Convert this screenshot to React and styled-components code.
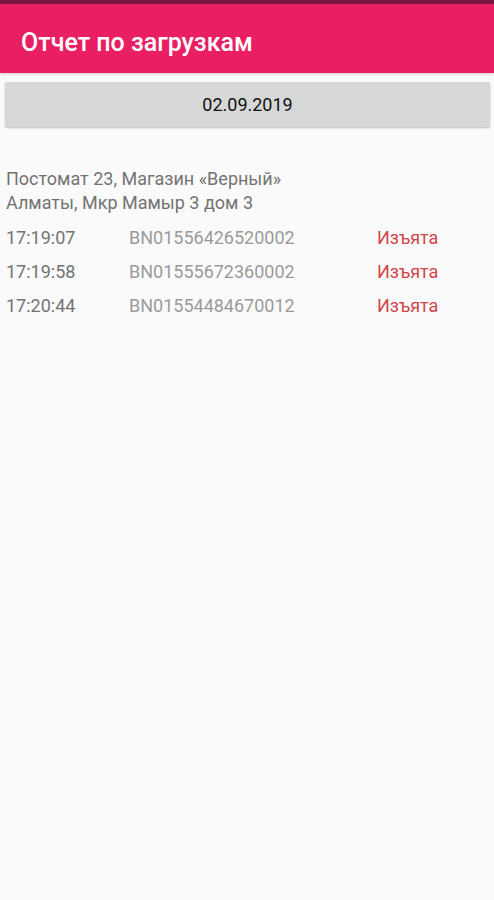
import * as React from 'react'
import styled, { createGlobalStyle } from 'styled-components'

const Global = createGlobalStyle`
  html, body {
    margin: 0;
    padding: 0;
    background: #fafafa;
    font-family: Roboto, "Noto Sans", sans-serif;
  }
`

const Screen = styled.div`
  width: 494px;
  min-height: 900px;
  background: #fafafa;
`

const StatusBar = styled.div`
  height: 4px;
  background: #7a1645;
`

const AppBar = styled.header`
  height: 69px;
  background: #e91e63;
  display: flex;
  align-items: center;
  padding: 0 21px;
  box-shadow: 0 1px 3px rgba(0, 0, 0, 0.2);
`

const Title = styled.h1`
  margin: 0;
  color: #fff;
  font-size: 25px;
  font-weight: 500;
  padding-top: 7px;
`

const DateButton = styled.button`
  display: block;
  margin: 9px 4px 0 5px;
  width: calc(100% - 9px);
  height: 45px;
  border: none;
  border-radius: 2px;
  background: #d6d7d7;
  color: #111;
  font-family: Roboto, sans-serif;
  font-size: 18px;
  box-shadow: 0 1px 2px rgba(0, 0, 0, 0.25);
`

const Content = styled.div`
  padding: 40px 6px 0;
  color: #737373;
  font-size: 18px;
`

const Address = styled.div`
  line-height: 23.5px;
  margin-bottom: 6px;
`

const Row = styled.div`
  display: grid;
  grid-template-columns: 123px 248px 1fr;
  height: 34px;
  align-items: center;
`

const Code = styled.span`
  color: #9a9a9a;
`

const Status = styled.span`
  color: #d0464a;
`

const rows = [
  ['17:19:07', 'BN01556426520002'],
  ['17:19:58', 'BN01555672360002'],
  ['17:20:44', 'BN01554484670012'],
]

export default function App() {
  return (
    <Screen>
      <Global />
      <StatusBar />
      <AppBar>
        <Title>Отчет по загрузкам</Title>
      </AppBar>
      <DateButton>02.09.2019</DateButton>
      <Content>
        <Address>
          Постомат 23, Магазин «Верный»
          <br />
          Алматы, Мкр Мамыр 3 дом 3
        </Address>
        {rows.map(([time, code]) => (
          <Row key={code}>
            <span>{time}</span>
            <Code>{code}</Code>
            <Status>Изъята</Status>
          </Row>
        ))}
      </Content>
    </Screen>
  )
}
